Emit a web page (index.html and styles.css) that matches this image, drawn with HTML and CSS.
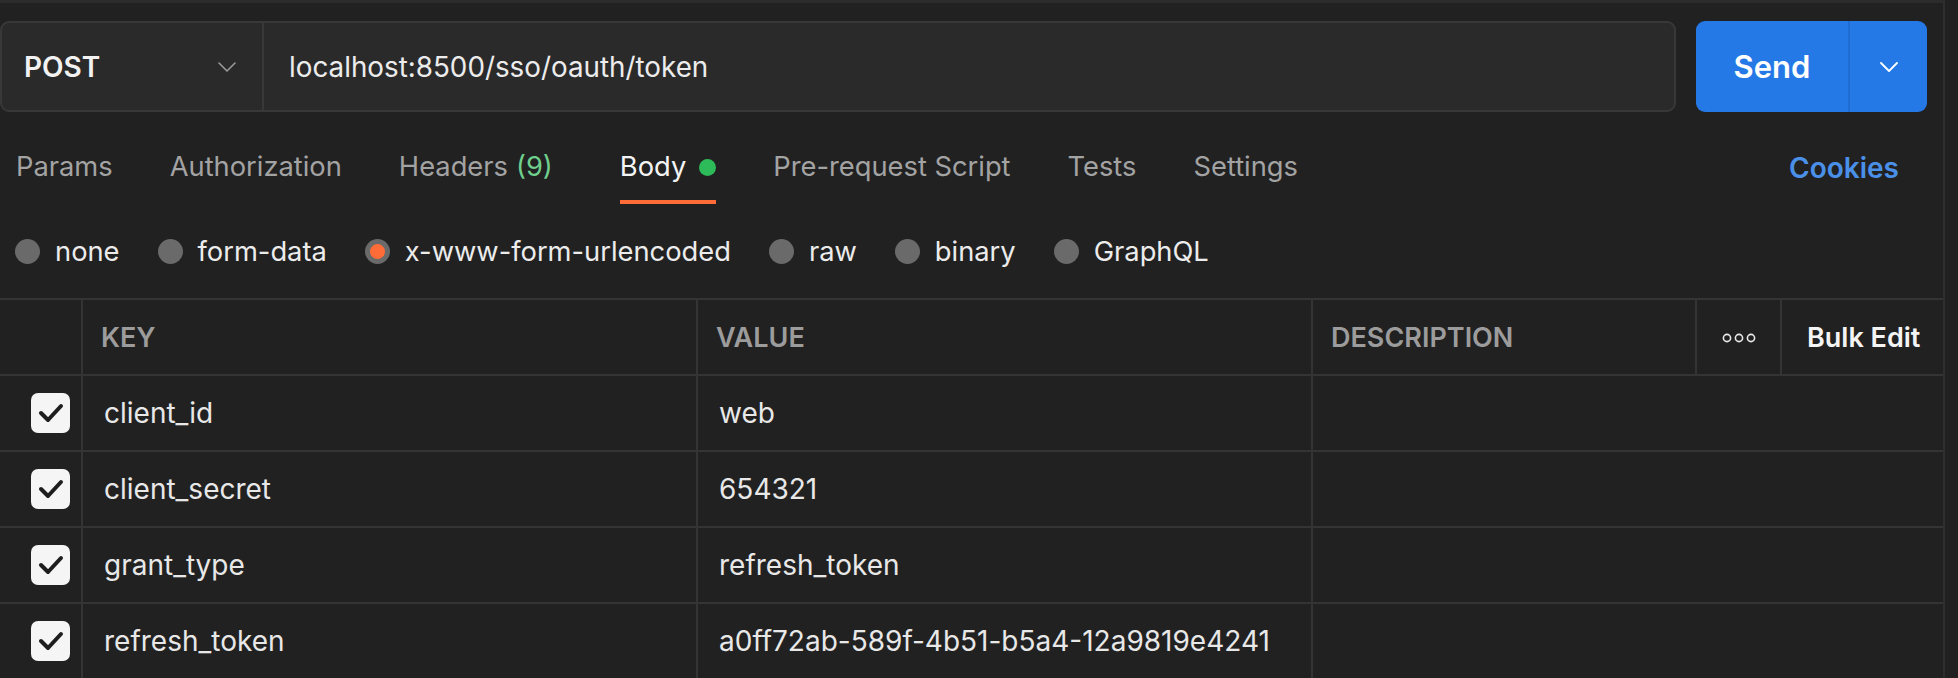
FILE: index.html
```html
<!DOCTYPE html>
<html lang="en">
<head>
<meta charset="utf-8">
<title>POST localhost:8500/sso/oauth/token</title>
<link rel="stylesheet" href="styles.css">
</head>
<body>
<div class="page">
  <div class="url-row">
    <div class="request">
      <div class="method">
        <span class="method-name">POST</span>
        <svg class="chev" width="18" height="10" viewBox="0 0 18 10"><path d="M1 1 L9 9 L17 1" fill="none" stroke="#9a9a9a" stroke-width="1.6" stroke-linecap="round" stroke-linejoin="round"/></svg>
      </div>
      <div class="url">localhost:8500/sso/oauth/token</div>
    </div>
    <div class="send">
      <div class="send-main">Send</div>
      <div class="send-arrow">
        <svg width="18" height="10" viewBox="0 0 18 10"><path d="M1 1 L9 9 L17 1" fill="none" stroke="#ffffff" stroke-width="1.8" stroke-linecap="round" stroke-linejoin="round"/></svg>
      </div>
    </div>
  </div>

  <div class="tabs">
    <div class="tab">Params</div>
    <div class="tab">Authorization</div>
    <div class="tab with-count">Headers <span class="count">(9)</span></div>
    <div class="tab active">Body <span class="dot"></span></div>
    <div class="tab">Pre-request Script</div>
    <div class="tab">Tests</div>
    <div class="tab">Settings</div>
    <div class="cookies">Cookies</div>
  </div>

  <div class="radios">
    <div class="radio"><span class="circle"></span>none</div>
    <div class="radio"><span class="circle"></span>form-data</div>
    <div class="radio"><span class="circle selected"></span>x-www-form-urlencoded</div>
    <div class="radio"><span class="circle"></span>raw</div>
    <div class="radio"><span class="circle"></span>binary</div>
    <div class="radio"><span class="circle"></span>GraphQL</div>
  </div>

  <div class="grid">
    <div class="cell head first"></div>
    <div class="cell head">KEY</div>
    <div class="cell head">VALUE</div>
    <div class="cell head">DESCRIPTION</div>
    <div class="cell head center">
      <svg width="34" height="10" viewBox="0 0 34 10"><circle cx="5" cy="5" r="3.6" fill="none" stroke="#e8e8e8" stroke-width="1.6"/><circle cx="17" cy="5" r="3.6" fill="none" stroke="#e8e8e8" stroke-width="1.6"/><circle cx="29" cy="5" r="3.6" fill="none" stroke="#e8e8e8" stroke-width="1.6"/></svg>
    </div>
    <div class="cell head bulk">Bulk Edit</div>

    <div class="cell first"><span class="check"><svg width="26" height="22" viewBox="0 0 26 22"><path d="M3 11 L10 18 L23 4" fill="none" stroke="#1e1e1e" stroke-width="4" stroke-linecap="round" stroke-linejoin="round"/></svg></span></div>
    <div class="cell data">client_id</div>
    <div class="cell data">web</div>
    <div class="cell data desc"></div>

    <div class="cell first"><span class="check"><svg width="26" height="22" viewBox="0 0 26 22"><path d="M3 11 L10 18 L23 4" fill="none" stroke="#1e1e1e" stroke-width="4" stroke-linecap="round" stroke-linejoin="round"/></svg></span></div>
    <div class="cell data">client_secret</div>
    <div class="cell data">654321</div>
    <div class="cell data desc"></div>

    <div class="cell first"><span class="check"><svg width="26" height="22" viewBox="0 0 26 22"><path d="M3 11 L10 18 L23 4" fill="none" stroke="#1e1e1e" stroke-width="4" stroke-linecap="round" stroke-linejoin="round"/></svg></span></div>
    <div class="cell data">grant_type</div>
    <div class="cell data">refresh_token</div>
    <div class="cell data desc"></div>

    <div class="cell first"><span class="check"><svg width="26" height="22" viewBox="0 0 26 22"><path d="M3 11 L10 18 L23 4" fill="none" stroke="#1e1e1e" stroke-width="4" stroke-linecap="round" stroke-linejoin="round"/></svg></span></div>
    <div class="cell data">refresh_token</div>
    <div class="cell data">a0ff72ab-589f-4b51-b5a4-12a9819e4241</div>
    <div class="cell data desc"></div>
  </div>
</div>
</body>
</html>
```

FILE: styles.css
```css
* { box-sizing: border-box; }

html, body {
  margin: 0;
  padding: 0;
  background: #212121;
  width: 1958px;
  height: 678px;
  overflow: hidden;
}

body {
  font-family: Inter, "Noto Sans", sans-serif;
  font-size: 28px;
  color: #e6e6e6;
}

.page {
  width: 1945px;
  height: 678px;
  border-top: 3px solid #2c2c2c;
  border-right: 2px solid #2e2e2e;
  display: flex;
  flex-direction: column;
  overflow: hidden;
}

/* URL row */
.url-row {
  display: flex;
  margin-top: 18px;
  height: 91px;
  padding-right: 16px;
  gap: 20px;
}

.request {
  flex: 1;
  display: flex;
  background: #2a2a2a;
  border: 2px solid #383838;
  border-radius: 9px;
}

.method {
  width: 262px;
  display: flex;
  align-items: center;
  justify-content: space-between;
  padding: 0 26px 0 22px;
  border-right: 2px solid #383838;
}

.method-name {
  font-weight: 600;
  color: #f2f2f2;
}

.url {
  display: flex;
  align-items: center;
  padding-left: 25px;
  font-size: 27.8px;
  color: #ececec;
}

.send {
  width: 231px;
  display: flex;
  background: #2479e6;
  border-radius: 9px;
  overflow: hidden;
}

.send-main {
  width: 154px;
  display: flex;
  align-items: center;
  justify-content: center;
  font-size: 31px;
  font-weight: 600;
  color: #ffffff;
  border-right: 2px solid #1f6dd3;
}

.send-arrow {
  flex: 1;
  display: flex;
  align-items: center;
  justify-content: center;
}

/* Tabs */
.tabs {
  display: flex;
  align-items: flex-end;
  margin-top: 16px;
  padding-left: 16px;
  padding-right: 44px;
  gap: 57px;
  font-size: 27.3px;
}

.tab {
  display: flex;
  align-items: center;
  gap: 13px;
  padding: 22px 0 16px;
  line-height: 34px;
  border-bottom: 4px solid transparent;
  color: #a3a3a3;
}

.tab.with-count {
  margin-right: 10px;
}

.tab.active {
  color: #f4f4f4;
  border-bottom-color: #ff6c37;
}

.count { color: #6fcf8d; margin-left: -5px; }

.dot {
  width: 17px;
  height: 17px;
  border-radius: 50%;
  background: #2dba59;
}

.cookies {
  margin-left: auto;
  align-self: center;
  padding-top: 4px;
  color: #4a90e8;
  font-weight: 600;
  font-size: 28px;
}

/* Radios */
.radios {
  height: 94px;
  display: flex;
  align-items: center;
  padding-left: 15px;
  gap: 38px;
  font-size: 27.3px;
}

.radio {
  display: flex;
  align-items: center;
  gap: 15px;
  color: #ececec;
}

.circle {
  width: 25px;
  height: 25px;
  border-radius: 50%;
  background: #6a6a6a;
}

.circle.selected {
  background: #ff6c37;
  border: 5px solid #6a6a6a;
}

/* Table */
.grid {
  display: grid;
  grid-template-columns: 81px 615px 615px 384px 85px 1fr;
  grid-auto-rows: 76px;
}

.cell {
  border-top: 2px solid #343434;
  border-left: 2px solid #343434;
  display: flex;
  align-items: center;
}

.cell.first {
  border-left: none;
  justify-content: flex-end;
  padding-right: 11px;
}

.head {
  height: 77px;
  padding-left: 18px;
  font-size: 27px;
  font-weight: 600;
  color: #9c9c9c;
}

.head.first { padding-left: 0; }

.head.center {
  justify-content: center;
  padding-left: 0;
}

.head.bulk {
  color: #f4f4f4;
  padding-left: 25px;
}

.data {
  padding-left: 21px;
  color: #e8e8e8;
}

.desc {
  grid-column: span 3;
}

.check {
  width: 39px;
  height: 40px;
  border-radius: 7px;
  background: #f5f5f5;
  display: flex;
  align-items: center;
  justify-content: center;
}
```
